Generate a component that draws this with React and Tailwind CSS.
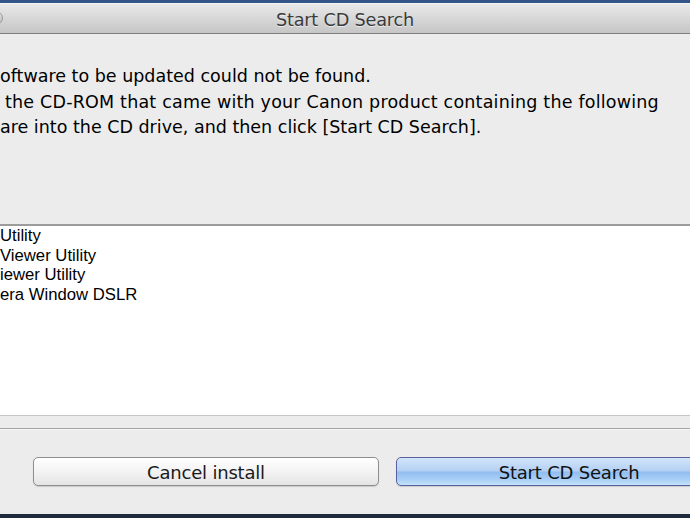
const items = ["Utility", "Viewer Utility", "iewer Utility", "era Window DSLR"];

export default function App() {
  return (
    <div className="w-[690px] h-[518px] overflow-hidden bg-[#ececec] flex flex-col font-['DejaVu_Sans',sans-serif] text-black">
      {/* desktop strip above the window */}
      <div className="h-[3px] bg-[#33558a]" />
      <div className="relative h-[31px] border-t border-[#f4f4f4] border-b border-b-[#7f7f7f] bg-gradient-to-b from-[#e9e9e9] to-[#c6c6c6] flex items-center justify-center pt-[3px]">
        <div className="absolute -left-[11px] top-[7px] w-[14px] h-[14px] rounded-full border border-[#9a9a9a] bg-gradient-to-b from-[#e0e0e0] to-[#bdbdbd]" />
        <span className="text-[17.7px] text-[#3b3b3b] tracking-[-0.2px] [text-shadow:0_1px_0_rgba(255,255,255,0.6)]">
          Start CD Search
        </span>
      </div>

      <div className="pt-[30px] text-[17.5px] leading-[25.5px] h-[190px]">
        <p className="whitespace-nowrap">oftware to be updated could not be found.</p>
        <p className="whitespace-nowrap pl-[5px] tracking-[0.2px]">the CD-ROM that came with your Canon product containing the following</p>
        <p className="whitespace-nowrap">are into the CD drive, and then click [Start CD Search].</p>
      </div>

      <div className="h-[192px] bg-white border-t-2 border-t-[#9c9c9c] border-b border-b-[#c6c6c6] font-['Liberation_Sans',sans-serif] text-[16.7px] leading-[19.7px]">
        {items.map((t) => (
          <div key={t} className="whitespace-nowrap">{t}</div>
        ))}
      </div>

      <div className="h-[12px]" />
      <div className="h-px bg-[#a4a4a4]" />
      <div className="h-px bg-[#f6f6f6]" />

      <div className="flex-1 flex items-center gap-[17px] pl-[33px] pb-[1px]">
        <button className="w-[346px] shrink-0 h-[29px] pt-[1px] rounded-[5px] border border-[#8e8e8e] bg-gradient-to-b from-white via-[#f3f3f3] to-[#e4e4e4] shadow-[0_1px_1px_rgba(0,0,0,0.15)] text-[18px] text-[#1a1a1a] tracking-[-0.2px]">
          Cancel install
        </button>
        <button className="w-[346px] shrink-0 h-[29px] pt-[1px] rounded-[5px] border border-[#5a60a0] bg-[linear-gradient(to_bottom,#d3e4f9_0%,#b3d0f4_48%,#91bdf0_52%,#a9cff6_80%,#c4e2fb_100%)] shadow-[0_1px_1px_rgba(0,0,0,0.15)] text-[18px] text-[#111] tracking-[-0.2px]">
          Start CD Search
        </button>
      </div>

      <div className="h-[4px] bg-[#1e2b3d]" />
    </div>
  );
}
